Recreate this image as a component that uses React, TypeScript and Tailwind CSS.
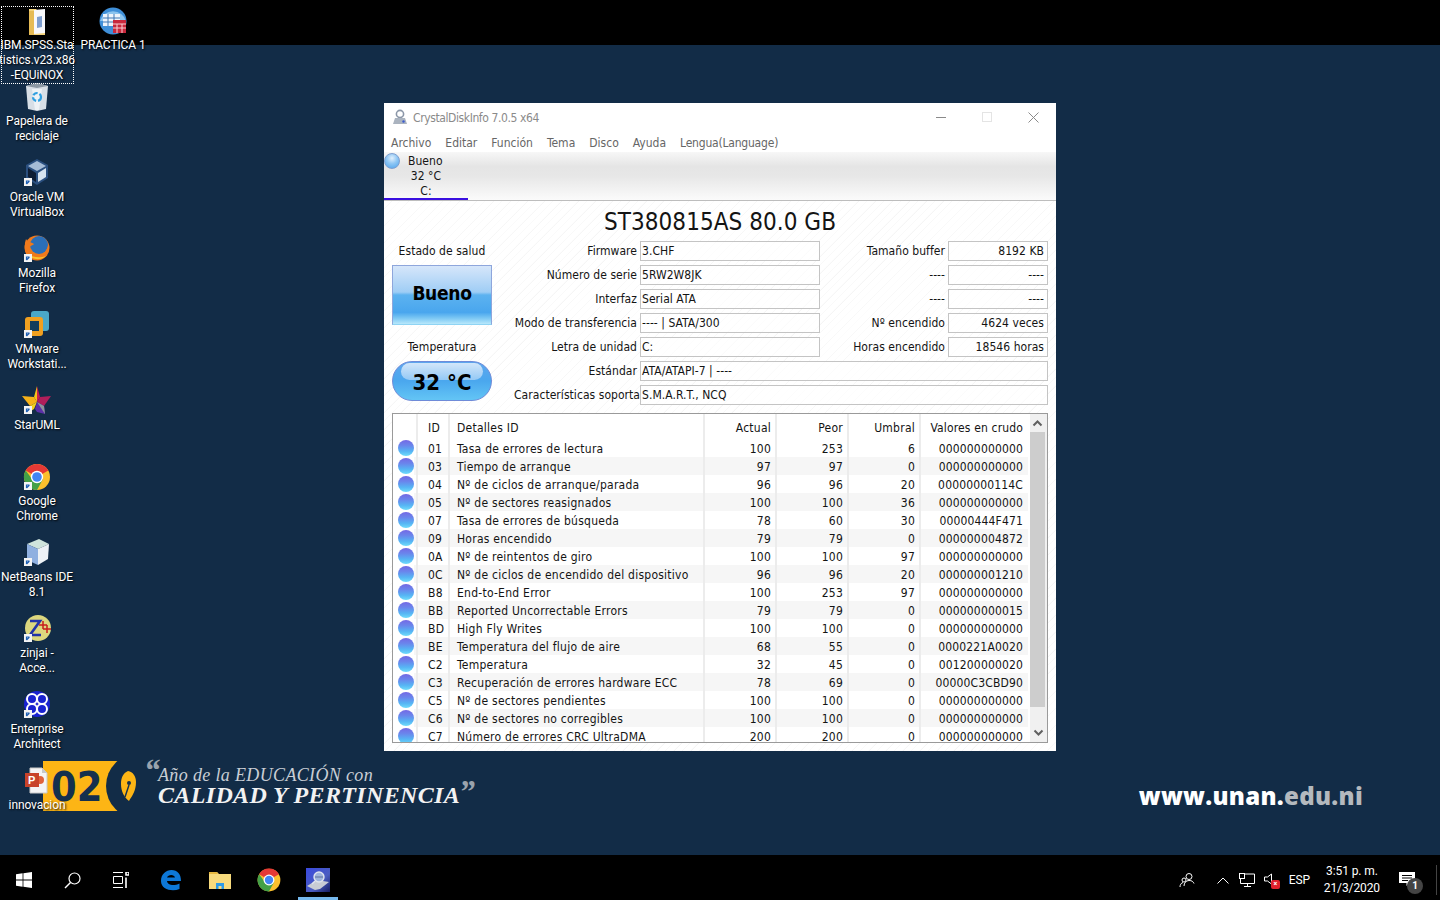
import type { ReactNode } from 'react'

const tahoma = "[font-family:'DejaVu_Sans',sans-serif] font-stretch-condensed"

const smart = [
  ['01', 'Tasa de errores de lectura', '100', '253', '6', '000000000000'],
  ['03', 'Tiempo de arranque', '97', '97', '0', '000000000000'],
  ['04', 'Nº de ciclos de arranque/parada', '96', '96', '20', '00000000114C'],
  ['05', 'Nº de sectores reasignados', '100', '100', '36', '000000000000'],
  ['07', 'Tasa de errores de búsqueda', '78', '60', '30', '00000444F471'],
  ['09', 'Horas encendido', '79', '79', '0', '000000004872'],
  ['0A', 'Nº de reintentos de giro', '100', '100', '97', '000000000000'],
  ['0C', 'Nº de ciclos de encendido del dispositivo', '96', '96', '20', '000000001210'],
  ['B8', 'End-to-End Error', '100', '253', '97', '000000000000'],
  ['BB', 'Reported Uncorrectable Errors', '79', '79', '0', '000000000015'],
  ['BD', 'High Fly Writes', '100', '100', '0', '000000000000'],
  ['BE', 'Temperatura del flujo de aire', '68', '55', '0', '0000221A0020'],
  ['C2', 'Temperatura', '32', '45', '0', '001200000020'],
  ['C3', 'Recuperación de errores hardware ECC', '78', '69', '0', '00000C3CBD90'],
  ['C5', 'Nº de sectores pendientes', '100', '100', '0', '000000000000'],
  ['C6', 'Nº de sectores no corregibles', '100', '100', '0', '000000000000'],
  ['C7', 'Número de errores CRC UltraDMA', '200', '200', '0', '000000000000'],
]

function Shortcut() {
  return (
    <g transform="translate(3 -2)">
      <rect x="0" y="23" width="8" height="8" fill="#f4f4f4" />
      <path d="M2.500 29v-3h3M5.500 26l-3 3" stroke="#1d5fb4" strokeWidth="1.2" fill="none" />
    </g>
  )
}

function ChromeIcon({ size = 32 }: { size?: number }) {
  return (
    <svg width={size} height={size} viewBox="0 0 32 32">
      <circle cx="16" cy="16" r="13" fill="#fbc02d" />
      <path d="M16 16 L4.700 9.500 A13 13 0 0 1 27.300 9.500 Z" fill="#e53935" />
      <path d="M4.700 9.500 A13 13 0 0 0 16 29 L22 18 L11 18 Z" fill="#43a047" />
      <circle cx="16" cy="16" r="6.200" fill="#fff" />
      <circle cx="16" cy="16" r="4.800" fill="#4285f4" />
    </svg>
  )
}

const icons: Record<string, ReactNode> = {
  spss: (
    <svg width="32" height="32" viewBox="0 0 32 32">
      <path d="M8 4h7l2 2h7v24H8z" fill="#f3d27a" />
      <path d="M13 5l11-1v24l-11 1z" fill="#f8f8fb" />
      <path d="M16 12l5-1v11l-5 1z" fill="#7f9fd0" />
      <path d="M8 6h5v24H8z" fill="#e6bb55" />
    </svg>
  ),
  practica: (
    <svg width="32" height="32" viewBox="0 0 32 32">
      <g transform="translate(1 1)">
        <circle cx="15" cy="15" r="13.500" fill="#3f8fd8" />
        <path d="M2 15a13.500 13.500 0 0 1 26 0z" fill="#8cc4ee" />
        <rect x="5" y="8" width="17" height="12" fill="#eef4fb" />
        <path d="M5 12h17M5 16h17M10 8v12M16 8v12" stroke="#3f79b5" strokeWidth="1" />
        <rect x="15" y="14" width="13" height="13" fill="#c8283c" />
        <path d="M15 18h13M15 22h13M19 18v9M24 18v9" stroke="#f6cfd3" strokeWidth="1" />
      </g>
    </svg>
  ),
  bin: (
    <svg width="32" height="32" viewBox="0 0 32 32">
      <path d="M5 5l11-3 11 3-2 23-9 2-9-2z" fill="#d8dfe6" />
      <path d="M5 5l11-3 11 3-11 2z" fill="#8b98a4" />
      <path d="M11 8l3 21 4 0 3-21z" fill="#eef2f5" />
      <circle cx="16" cy="16" r="4" fill="none" stroke="#2f9fe0" strokeWidth="2.200" strokeDasharray="5 2" />
    </svg>
  ),
  vbox: (
    <svg width="32" height="32" viewBox="0 0 32 32">
      <path d="M16 2l11 6v13l-11 7-11-7V8z" fill="#2a4f7f" />
      <path d="M16 4l9 5-9 5-9-5z" fill="#a5bcd6" />
      <path d="M7 11l8 5v9l-8-5z" fill="#0e1d33" />
      <path d="M25 11l-8 5v9l8-5z" fill="#d7e3ef" />
      <Shortcut />
    </svg>
  ),
  firefox: (
    <svg width="32" height="32" viewBox="0 0 32 32">
      <circle cx="16" cy="15" r="12.500" fill="#f07a1c" />
      <circle cx="18" cy="12" r="9" fill="#2b6fb8" />
      <path d="M5 6c2 4 6 3 8 5-2 2-4 1-5 5 0 5 6 8 12 6 3-1 6-5 7-9 1 8-5 14-12 14C7 27 1 17 5 6z" fill="#f07a1c" />
      <path d="M7 21c4 6 12 7 18 2-5 2-13 2-18-2z" fill="#fcc42c" />
      <Shortcut />
    </svg>
  ),
  vmware: (
    <svg width="32" height="32" viewBox="0 0 32 32">
      <rect x="10" y="2" width="18" height="20" rx="3" fill="#4aa8c8" />
      <rect x="4" y="8" width="18" height="19" rx="3" fill="#f0a020" />
      <rect x="9" y="12" width="9" height="10" fill="#123c5c" />
      <Shortcut />
    </svg>
  ),
  star: (
    <svg width="32" height="32" viewBox="0 0 32 32">
      <path d="M16 1l-3 11 3 5z" fill="#f7c518" />
      <path d="M16 1l3 11-3 5z" fill="#c8224f" />
      <path d="M1 11l12 1 3 5-7 4z" fill="#f7b218" />
      <path d="M30 11l-11 1-3 5 7 4z" fill="#b01e5a" />
      <path d="M9 21l7-4-3 7-6 4z" fill="#f2d020" />
      <path d="M16 17l-2 7 2 3 8 2-1-8z" fill="#5b2fa8" />
      <path d="M16 17l7 4 1 8z" fill="#8f939a" />
      <Shortcut />
    </svg>
  ),
  chrome: (
    <svg width="32" height="32" viewBox="0 0 32 32">
      <foreignObject width="32" height="32">
        <ChromeIcon />
      </foreignObject>
      <Shortcut />
    </svg>
  ),
  netbeans: (
    <svg width="32" height="32" viewBox="0 0 32 32">
      <path d="M6 7l12-5 10 5-11 5z" fill="#cfe4dc" />
      <path d="M6 7l11 5v16L6 23z" fill="#8fb0e0" />
      <path d="M28 7l-11 5v16l10-6z" fill="#eef2f6" />
      <Shortcut />
    </svg>
  ),
  zinjai: (
    <svg width="32" height="32" viewBox="0 0 32 32">
      <circle cx="17" cy="15" r="13" fill="#dcd77e" />
      <path d="M9 8h10L9 22h11" fill="none" stroke="#2233a8" strokeWidth="2.600" />
      <path d="M22 8v8M18 12h8M26 12v8M22 16h8" stroke="#c81e1e" strokeWidth="1.500" />
      <Shortcut />
    </svg>
  ),
  ea: (
    <svg width="32" height="32" viewBox="0 0 32 32">
      <circle cx="16" cy="15" r="13" fill="#1a22d0" />
      <circle cx="11" cy="10" r="5" fill="none" stroke="#fff" strokeWidth="2" />
      <circle cx="21" cy="10" r="5" fill="none" stroke="#fff" strokeWidth="2" />
      <circle cx="11" cy="20" r="5" fill="none" stroke="#fff" strokeWidth="2" />
      <circle cx="21" cy="20" r="5" fill="none" stroke="#fff" strokeWidth="2" />
      <Shortcut />
    </svg>
  ),
  ppt: (
    <svg width="32" height="32" viewBox="0 0 32 32">
      <path d="M9 3h12l5 5v20H9z" fill="#f4f4f4" stroke="#c8c8c8" />
      <path d="M21 3v5h5z" fill="#c8c8c8" />
      <circle cx="19" cy="15" r="4" fill="#e0633c" />
      <rect x="4" y="8" width="14" height="14" fill="#c8432a" />
      <text x="7" y="19" fontSize="11" fontWeight="700" fill="#fff" fontFamily="Liberation Sans">P</text>
    </svg>
  ),
}

function DesktopIcon({ icon, lines }: { icon: string; lines: string[] }) {
  return (
    <div className="flex h-[76px] w-[74px] flex-col items-center">
      <div className="mb-px h-8 w-8">{icons[icon]}</div>
      <div className="whitespace-nowrap text-center text-xs leading-[15px] tracking-[-0.1px] text-white [font-family:Roboto,sans-serif] [text-shadow:1px_1px_2px_#000]">
        {lines.map((l) => (
          <div key={l}>{l}</div>
        ))}
      </div>
    </div>
  )
}

function Ball({ size = 'row' }: { size?: 'row' | 'tab' }) {
  return size === 'row' ? (
    <div className="h-4 w-4 rounded-full bg-[linear-gradient(180deg,#7468e4_0%,#6a86ec_35%,#56b4f4_70%,#6fdcfa_100%)]" />
  ) : (
    <div className="mt-px h-4 w-4 rounded-full border border-[#7f9fd0] bg-[radial-gradient(circle_at_50%_30%,#e2f0fc_0%,#8ec6f4_45%,#4ba3ec_100%)]" />
  )
}

function Box({ children, right, className = 'w-[180px]' }: { children: ReactNode; right?: boolean; className?: string }) {
  return (
    <div className={`flex h-5 items-center whitespace-nowrap border border-[#c4c4c4] bg-white/60 pl-px pr-[3px] ${right ? 'justify-end' : ''} ${className}`}>
      {children}
    </div>
  )
}

function InfoRow({ label, value, label2, value2 }: { label: string; value: string; label2: string; value2: string }) {
  return (
    <div className="flex h-5 items-center">
      <div className="w-[148px] pr-[3px] text-right whitespace-nowrap">{label}</div>
      <Box>{value}</Box>
      <div className="w-[128px] pr-[3px] text-right whitespace-nowrap">{label2}</div>
      <Box right className="w-[100px]">{value2}</Box>
    </div>
  )
}

function ScrollChevron({ d }: { d: string }) {
  return (
    <svg width="17" height="17" viewBox="0 0 17 17">
      <path d={d} fill="none" stroke="#606060" strokeWidth="2" />
    </svg>
  )
}

function Cell({ children, className, head }: { children?: ReactNode; className: string; head?: boolean }) {
  return (
    <div className={`flex h-full items-center whitespace-nowrap ${head ? 'pt-1' : 'pt-[2px]'} ${className}`}>
      {children}
    </div>
  )
}

const sep = 'border-r-2 border-[#ececec]'

function SmartColumns({ r, head }: { r: string[]; head?: boolean }) {
  return (
    <>
      <Cell head={head} className={`w-[32px] pl-[10px] ${sep}`}>{r[0]}</Cell>
      <Cell head={head} className={`w-[255px] pl-[7px] ${sep}`}>{r[1]}</Cell>
      <Cell head={head} className={`w-[72px] justify-end pr-[4px] ${sep}`}>{r[2]}</Cell>
      <Cell head={head} className={`w-[72px] justify-end pr-[4px] ${sep}`}>{r[3]}</Cell>
      <Cell head={head} className={`w-[72px] justify-end pr-[4px] ${sep}`}>{r[4]}</Cell>
      <Cell head={head} className="w-[107px] justify-end pr-[5px] tracking-[0.15px]">{r[5]}</Cell>
    </>
  )
}

function CrystalDiskInfo() {
  return (
    <div className={`absolute left-[384px] top-[103px] flex h-[648px] w-[672px] flex-col bg-white text-xs leading-[15px] tracking-[0.05px] text-[#141414] ${tahoma}`}>
      {/* titlebar */}
      <div className="flex h-7 items-center pl-2 text-[#8a8a8a]">
        <svg width="16" height="16" viewBox="0 0 16 16" className="mr-[5px]">
          <circle cx="8" cy="5" r="3.600" fill="none" stroke="#8b97a8" strokeWidth="1.600" />
          <path d="M3 9h10l2 6H1z" fill="#aab3bf" />
          <circle cx="11.500" cy="12.500" r="1.200" fill="#3c5cd0" />
        </svg>
        <span className="pt-[2px] tracking-[-0.4px]">CrystalDiskInfo 7.0.5 x64</span>
        <div className="ml-auto flex h-7 items-center text-[#8a8a8a]">
          <div className="flex w-[46px] justify-center"><div className="h-px w-[10px] bg-[#8a8a8a]" /></div>
          <div className="flex w-[46px] justify-center"><div className="h-[10px] w-[10px] border border-[#e4e4e4]" /></div>
          <div className="flex w-[46px] justify-center">
            <svg width="11" height="11" viewBox="0 0 11 11"><path d="M0.500 0.500l10 10M10.500 0.500l-10 10" stroke="#8a8a8a" /></svg>
          </div>
        </div>
      </div>
      {/* menu */}
      <div className="flex h-[21px] items-center gap-[14px] pl-[7px] pt-[3px] tracking-normal text-[#666]">
        {['Archivo', 'Editar', 'Función', 'Tema', 'Disco', 'Ayuda'].map((m) => (
          <span key={m}>{m}</span>
        ))}
        <span className="tracking-[-0.2px]">Lengua(Language)</span>
      </div>
      {/* disk tabs */}
      <div className="h-[49px] border-b border-[#bdbdbd] bg-[linear-gradient(180deg,#f7f7f7_0%,#e5e5e5_30%,#e7e7e7_50%,#fbfbfb_100%)]">
        <div className="flex h-[48px] w-[84px] items-start border-b-2 border-[#3a10e0]">
          <Ball size="tab" />
          <div className="ml-[8px] w-[36px] whitespace-nowrap pt-[2px] text-center">
            <div className="text-left">Bueno</div>
            <div>32 °C</div>
            <div>C:</div>
          </div>
        </div>
      </div>
      {/* body */}
      <div className="flex flex-1 flex-col bg-[repeating-linear-gradient(135deg,#ffffff_0px,#ffffff_5px,#f5f5f5_6px)] px-2">
        <div className="flex h-10 items-center justify-center pt-[2px] text-2xl">ST380815AS 80.0 GB</div>
        <div className="flex">
          <div className="flex w-[100px] flex-col items-center">
            <div className="flex h-5 items-center">Estado de salud</div>
            <div className="mt-1 flex h-[60px] w-[100px] items-center justify-center border border-[#8ea6dc] border-b-[#8fd4f4] bg-[linear-gradient(180deg,#d6e6fa_0%,#9fcdf5_45%,#5cb2f0_50%,#49a6ee_80%,#7cc8f4_90%,#b8e8fb_100%)] pb-[4px] text-[19px] font-bold tracking-[-0.3px] text-black">
              Bueno
            </div>
            <div className="mt-[11px] flex h-5 items-center pt-[2px]">Temperatura</div>
            <div className="relative mt-[5px] flex h-10 w-[100px] items-center justify-center rounded-[20px] border border-[#6f8bd8] bg-[linear-gradient(180deg,#5ea6ee_0%,#4aa7ee_50%,#63c5f5_100%)] pt-[3px] text-[22px] font-bold text-black">
              <div className="absolute left-2 right-2 top-px h-[17px] rounded-[12px] bg-[linear-gradient(180deg,#d2e6fa,#94c9f5)]" />
              <span className="relative">32 °C</span>
            </div>
          </div>
          <div className="flex flex-col gap-1">
            <InfoRow label="Firmware" value="3.CHF" label2="Tamaño buffer" value2="8192 KB" />
            <InfoRow label="Número de serie" value="5RW2W8JK" label2="----" value2="----" />
            <InfoRow label="Interfaz" value="Serial ATA" label2="----" value2="----" />
            <InfoRow label="Modo de transferencia" value="---- | SATA/300" label2="Nº encendido" value2="4624 veces" />
            <InfoRow label="Letra de unidad" value="C:" label2="Horas encendido" value2="18546 horas" />
            <div className="flex h-5 items-center">
              <div className="w-[148px] pr-[3px] text-right whitespace-nowrap">Estándar</div>
              <Box className="w-[408px]">ATA/ATAPI-7 | ----</Box>
            </div>
            <div className="flex h-5 items-center">
              <div className="w-[148px] overflow-hidden whitespace-nowrap pl-[22px]">Características soportadas</div>
              <Box className="w-[408px]">S.M.A.R.T., NCQ</Box>
            </div>
          </div>
        </div>
        {/* smart list */}
        <div className="mt-2 flex h-[330px] border border-[#9a9a9a] bg-white tracking-[0.25px]">
          <div className="w-[637px] overflow-hidden">
            <div className="flex h-[25px]">
              <div className={`h-full w-[25px] ${sep}`} />
              <SmartColumns head r={['ID', 'Detalles ID', 'Actual', 'Peor', 'Umbral', 'Valores en crudo']} />
            </div>
            {smart.map((r, i) => (
              <div key={r[0]} className="flex h-[18px] items-center">
                <div className="flex h-full w-[21px] items-center justify-end"><Ball /></div>
                <div className={`flex h-full w-[614px] items-center ${i % 2 ? 'bg-[#f6f6f6]' : ''}`}>
                  <div className={`h-full w-[4px] ${sep}`} />
                  <SmartColumns r={r} />
                </div>
              </div>
            ))}
          </div>
          <div className="flex w-[17px] flex-col bg-[#f0f0f0]">
            <div className="translate-x-[-1px] translate-y-px"><ScrollChevron d="M4.500 10.500l4-4 4 4" /></div>
            <div className="mt-px h-[275px] w-[15px] bg-[#cdcdcd]" />
            <div className="mb-px mt-auto"><ScrollChevron d="M4.500 6.500l4 4 4-4" /></div>
          </div>
        </div>
      </div>
    </div>
  )
}

function Banner() {
  return (
    <div className="flex items-center">
      <div className="relative flex h-[50px] w-[77px] items-center overflow-hidden bg-[#fdb515] pl-[8px] pt-[3px] text-[41px] font-bold leading-none text-[#14304e] [font-family:'DejaVu_Sans',sans-serif] [font-stretch:condensed]">
        02
        <div className="absolute left-[63px] top-[-8px] h-[66px] w-[66px] rounded-full bg-[#122c47]" />
      </div>
      <svg width="17" height="32" viewBox="0 0 17 32">
        <path d="M8 1c5 1 8 5 8 11 0 9-4 14-7 19-5-4-8-10-8-17C1 8 3 3 8 1z" fill="#fdb515" />
        <path d="M5 27l4-12" stroke="#14304e" strokeWidth="1.400" />
        <circle cx="9" cy="13" r="2" fill="#14304e" />
      </svg>
      <div className="relative ml-[21px] -translate-y-px text-[#dfe3e8] [font-family:'Liberation_Serif',serif] italic">
        <div className="absolute -left-[14px] -top-[12px] text-[32px] font-bold leading-none text-[#9aa3ad]">“</div>
        <div className="whitespace-nowrap text-[18px] leading-[19px] tracking-[0.35px] text-[#c9ced5]">Año de la EDUCACIÓN con</div>
        <div className="whitespace-nowrap text-[24px] font-bold leading-[20px] tracking-[0.35px] text-[#f2f2f2]">CALIDAD Y PERTINENCIA</div>
        <div className="absolute left-full top-[9px] -ml-px text-[32px] font-bold leading-none text-[#9aa3ad]">”</div>
      </div>
    </div>
  )
}

function TaskButton({ children, active }: { children: ReactNode; active?: boolean }) {
  return (
    <div className="relative flex h-[45px] w-12 items-center justify-center pt-[5px]">
      {children}
      {active && <div className="absolute bottom-0 left-1 right-1 h-[3px] bg-[#76b9ed]" />}
    </div>
  )
}

function Taskbar() {
  return (
    <div className="flex h-[45px] items-center bg-black text-xs text-white [font-family:Roboto,sans-serif]">
      <TaskButton>
        <svg width="16" height="16" viewBox="0 0 16 16"><path d="M0 2.200l6.600-.9v6.200H0zM7.400 1.200L16 0v7.500H7.400zM0 8.400h6.600v6.300L0 13.800zM7.400 8.400H16V16l-8.600-1.200z" fill="#fff" /></svg>
      </TaskButton>
      <TaskButton>
        <svg width="17" height="17" viewBox="0 0 17 17"><circle cx="10.500" cy="6.500" r="5.500" fill="none" stroke="#fff" strokeWidth="1.200" /><path d="M6.500 10.500L1 16" stroke="#fff" strokeWidth="1.400" /></svg>
      </TaskButton>
      <TaskButton>
        <svg width="17" height="16" viewBox="0 0 17 16" fill="none" stroke="#fff"><path d="M1 .5h10M1 15.500h10M1.500 4.500h9v7h-9z" /><path d="M14 0v3h3V0zM14 5.500V16" strokeWidth="1.600" /></svg>
      </TaskButton>
      <div className="w-[3px]" />
      <TaskButton>
        <svg width="22" height="22" viewBox="0 0 22 22"><path d="M1 12C1 5 6 1 11.500 1 17.500 1 21 5 21 12H7c.5 4 6.500 5.500 12.500 2.500v5.500C12 23 1 20.500 1 12zM7 8.500h8c-.5-3.500-7-3.500-8 0z" fill="#0d78d8" /></svg>
      </TaskButton>
      <div className="w-px" />
      <TaskButton>
        <svg width="22" height="20" viewBox="0 0 22 20"><path d="M0 2h8l2 2h12v15H0z" fill="#f7da7c" /><path d="M0 2h8l1 2H0z" fill="#e6b83f" /><path d="M7 19v-6h8v6h-2.500v-3h-3v3z" fill="#2d9be6" /></svg>
      </TaskButton>
      <div className="w-px" />
      <TaskButton><ChromeIcon size={28} /></TaskButton>
      <div className="w-px" />
      <TaskButton active>
        <svg width="24" height="24" viewBox="0 0 24 24">
          <defs>
            <linearGradient id="cdi" x1="0" y1="0" x2="1" y2="1">
              <stop offset="0" stopColor="#3a4ae0" />
              <stop offset="0.6" stopColor="#4a5cc0" />
              <stop offset="1" stopColor="#141c60" />
            </linearGradient>
          </defs>
          <rect width="24" height="24" fill="url(#cdi)" />
          <path d="M1 18l10-6 12 2-9 7-5 1z" fill="#c8ccd4" />
          <circle cx="13" cy="9" r="5" fill="#9fb4dc" stroke="#dfe4ee" strokeWidth="1.400" />
          <path d="M9 9h8" stroke="#5c6f9c" />
          <path d="M9 13l-3 3" stroke="#dfe4ee" strokeWidth="1.500" />
        </svg>
      </TaskButton>
      <div className="ml-auto flex h-full items-center pt-[5px]">
        <svg width="16" height="16" viewBox="0 0 16 16" fill="none" stroke="#fff" className="mr-[22px]"><circle cx="10" cy="4.500" r="3" /><path d="M5 14c0-3 2-5.500 5-5.500s4 1 5 3M1 15c0-2 1-4 3-4.500" /><circle cx="5" cy="8" r="2" /></svg>
        <svg width="12" height="7" viewBox="0 0 12 7" className="mr-[10px]"><path d="M.5 6.500l5.500-5.500 5.500 5.500" fill="none" stroke="#fff" /></svg>
        <svg width="16" height="14" viewBox="0 0 16 14" fill="none" stroke="#fff" className="mr-[9px]"><path d="M5.500 1H15.500V10.500H1.500V6M8.500 10.500V13.500M5 13.500h7" /><rect x="0.500" y="0.500" width="5" height="5" /></svg>
        <div className="relative mr-[10px] h-[14px] w-[15px]">
          <svg width="9" height="12" viewBox="0 0 9 12" fill="none" stroke="#fff"><path d="M.5 4h3L7.500 1v10L3.500 8h-3z" /></svg>
          <div className="absolute bottom-[-2px] right-[-1px] flex h-[9px] w-[9px] items-center justify-center rounded-[2px] bg-[#e0202c] text-[7px] font-bold leading-none">×</div>
        </div>
        <span className="mr-[14px] tracking-[-0.2px]">ESP</span>
        <div className="mr-[19px] text-center leading-[17px] tracking-[-0.1px]">
          <div>3:51 p. m.</div>
          <div>21/3/2020</div>
        </div>
        <div className="relative mr-[21px] h-4 w-4">
          <svg width="16" height="15" viewBox="0 0 16 15"><path d="M0 0h16v11h-6l-2.500 3V11H0z" fill="#fff" /><path d="M3 3.500h10M3 6h10M3 8.500h6" stroke="#000" /></svg>
          <div className="absolute -bottom-[6px] -right-[8px] flex h-4 w-4 items-center justify-center rounded-full bg-[#444] text-[10px] font-bold leading-none">1</div>
        </div>
        <div className="mr-[3px] h-[30px] w-px bg-[#444]" />
      </div>
    </div>
  )
}

export default function App() {
  return (
    <div className="relative flex h-screen w-full flex-col overflow-hidden bg-black">
      <div className="h-[45px] bg-black" />
      <div className="flex flex-1 flex-col justify-end bg-[#122c47]">
        <div className="mb-[44px] flex h-[50px] items-start justify-between pl-[43px] pr-[77px]">
          <Banner />
          <div className="mt-[20px] text-[24px] font-extrabold leading-[30px] tracking-[0.3px] text-white [font-family:'Open_Sans',sans-serif]">
            www.unan.<span className="text-[#b4b9be]">edu.ni</span>
          </div>
        </div>
      </div>
      <Taskbar />

      {/* desktop icons */}
      <div className="absolute left-0 top-[5px] flex flex-col">
        <div className="relative">
          <div className="pointer-events-none absolute left-[1px] top-[1px] h-[78px] w-[73px] border border-dotted border-white" />
          <DesktopIcon icon="spss" lines={['IBM.SPSS.Sta', 'tistics.v23.x86', '-EQUiNOX']} />
        </div>
        <DesktopIcon icon="bin" lines={['Papelera de', 'reciclaje']} />
        <DesktopIcon icon="vbox" lines={['Oracle VM', 'VirtualBox']} />
        <DesktopIcon icon="firefox" lines={['Mozilla', 'Firefox']} />
        <DesktopIcon icon="vmware" lines={['VMware', 'Workstati...']} />
        <DesktopIcon icon="star" lines={['StarUML']} />
        <DesktopIcon icon="chrome" lines={['Google', 'Chrome']} />
        <DesktopIcon icon="netbeans" lines={['NetBeans IDE', '8.1']} />
        <DesktopIcon icon="zinjai" lines={['zinjai -', 'Acce...']} />
        <DesktopIcon icon="ea" lines={['Enterprise', 'Architect']} />
        <DesktopIcon icon="ppt" lines={['innovacion']} />
      </div>
      <div className="absolute left-[76px] top-[5px]">
        <DesktopIcon icon="practica" lines={['PRACTICA 1']} />
      </div>

      <CrystalDiskInfo />
    </div>
  )
}
